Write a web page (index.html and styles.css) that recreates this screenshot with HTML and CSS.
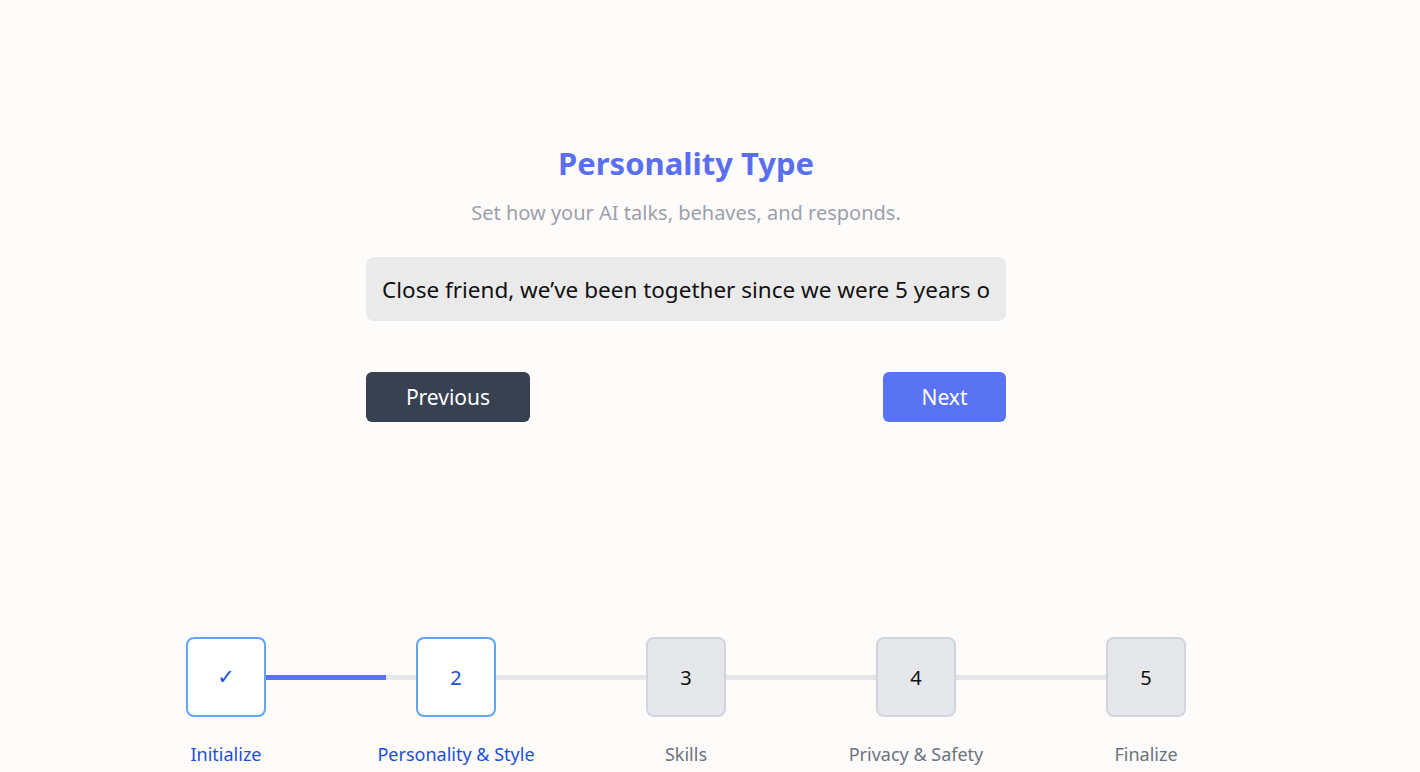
FILE: index.html
```html
<!DOCTYPE html>
<html lang="en">
<head>
<meta charset="utf-8">
<title>Personality Type</title>
<link rel="stylesheet" href="styles.css">
</head>
<body>
<main class="page">
  <section class="form">
    <h1 class="title">Personality Type</h1>
    <p class="subtitle">Set how your AI talks, behaves, and responds.</p>
    <input class="field" type="text" value="Close friend, we’ve been together since we were 5 years old and we tell each other everything.">
    <div class="actions">
      <button class="btn btn-prev">Previous</button>
      <button class="btn btn-next">Next</button>
    </div>
  </section>
  <nav class="stepper">
    <div class="track"><div class="progress" style="width:20%"></div></div>
    <div class="step done"><div class="box check">✓</div><span class="label">Initialize</span></div>
    <div class="step current"><div class="box">2</div><span class="label">Personality &amp; Style</span></div>
    <div class="step"><div class="box">3</div><span class="label">Skills</span></div>
    <div class="step"><div class="box">4</div><span class="label">Privacy &amp; Safety</span></div>
    <div class="step"><div class="box">5</div><span class="label">Finalize</span></div>
  </nav>
</main>
</body>
</html>
```
FILE: styles.css
```css
html, body {
  margin: 0;
  padding: 0;
  background: #fdfcfb;
  font-family: "Noto Sans", "Open Sans", sans-serif;
}
.page {
  width: 1000px;
  margin-left: 186px;
  padding-top: 141px;
  display: flex;
  flex-direction: column;
}
.form {
  width: 640px;
  margin: 0 auto;
  display: flex;
  flex-direction: column;
  align-items: center;
}
.title {
  margin: 0;
  font-size: 31px;
  line-height: 44px;
  font-weight: 700;
  color: #5a6ff0;
}
.subtitle {
  margin: 14px 0 0;
  font-size: 20px;
  line-height: 28px;
  color: #9ca0ab;
}
.field {
  margin-top: 30px;
  width: 640px;
  height: 64px;
  box-sizing: border-box;
  border: none;
  border-radius: 8px;
  background: #eaeaea;
  padding: 0 16px;
  font-family: inherit;
  font-size: 22.5px;
  color: #111111;
  outline: none;
}
.actions {
  margin-top: 51px;
  width: 100%;
  display: flex;
  justify-content: space-between;
}
.btn {
  height: 50px;
  border: none;
  border-radius: 6px;
  font-family: inherit;
  font-size: 21px;
  color: #ffffff;
  cursor: pointer;
}
.btn-prev {
  width: 164px;
  background: #374151;
}
.btn-next {
  width: 123px;
  background: #5a73f2;
}
.stepper {
  margin-top: 215px;
  position: relative;
  display: flex;
  justify-content: space-between;
}
.track {
  position: absolute;
  left: 0;
  right: 0;
  top: 38px;
  height: 5px;
  background: #e5e7eb;
}
.progress {
  height: 100%;
  background: #5a73f2;
}
.step {
  position: relative;
  width: 80px;
  display: flex;
  flex-direction: column;
  align-items: center;
}
.box {
  width: 80px;
  height: 80px;
  box-sizing: border-box;
  border: 2px solid #d1d5db;
  border-radius: 8px;
  background: #e5e7eb;
  display: flex;
  align-items: center;
  justify-content: center;
  font-size: 20px;
  color: #111111;
}
.box.check {
  font-family: "DejaVu Sans", sans-serif;
  font-size: 21px;
}
.step.done .box,
.step.current .box {
  background: #ffffff;
  border-color: #60a5fa;
  color: #1d4ed8;
}
.label {
  margin-top: 24px;
  white-space: nowrap;
  font-size: 18px;
  line-height: 26px;
  color: #6b7280;
}
.step.done .label,
.step.current .label {
  color: #1d4ed8;
}
```
